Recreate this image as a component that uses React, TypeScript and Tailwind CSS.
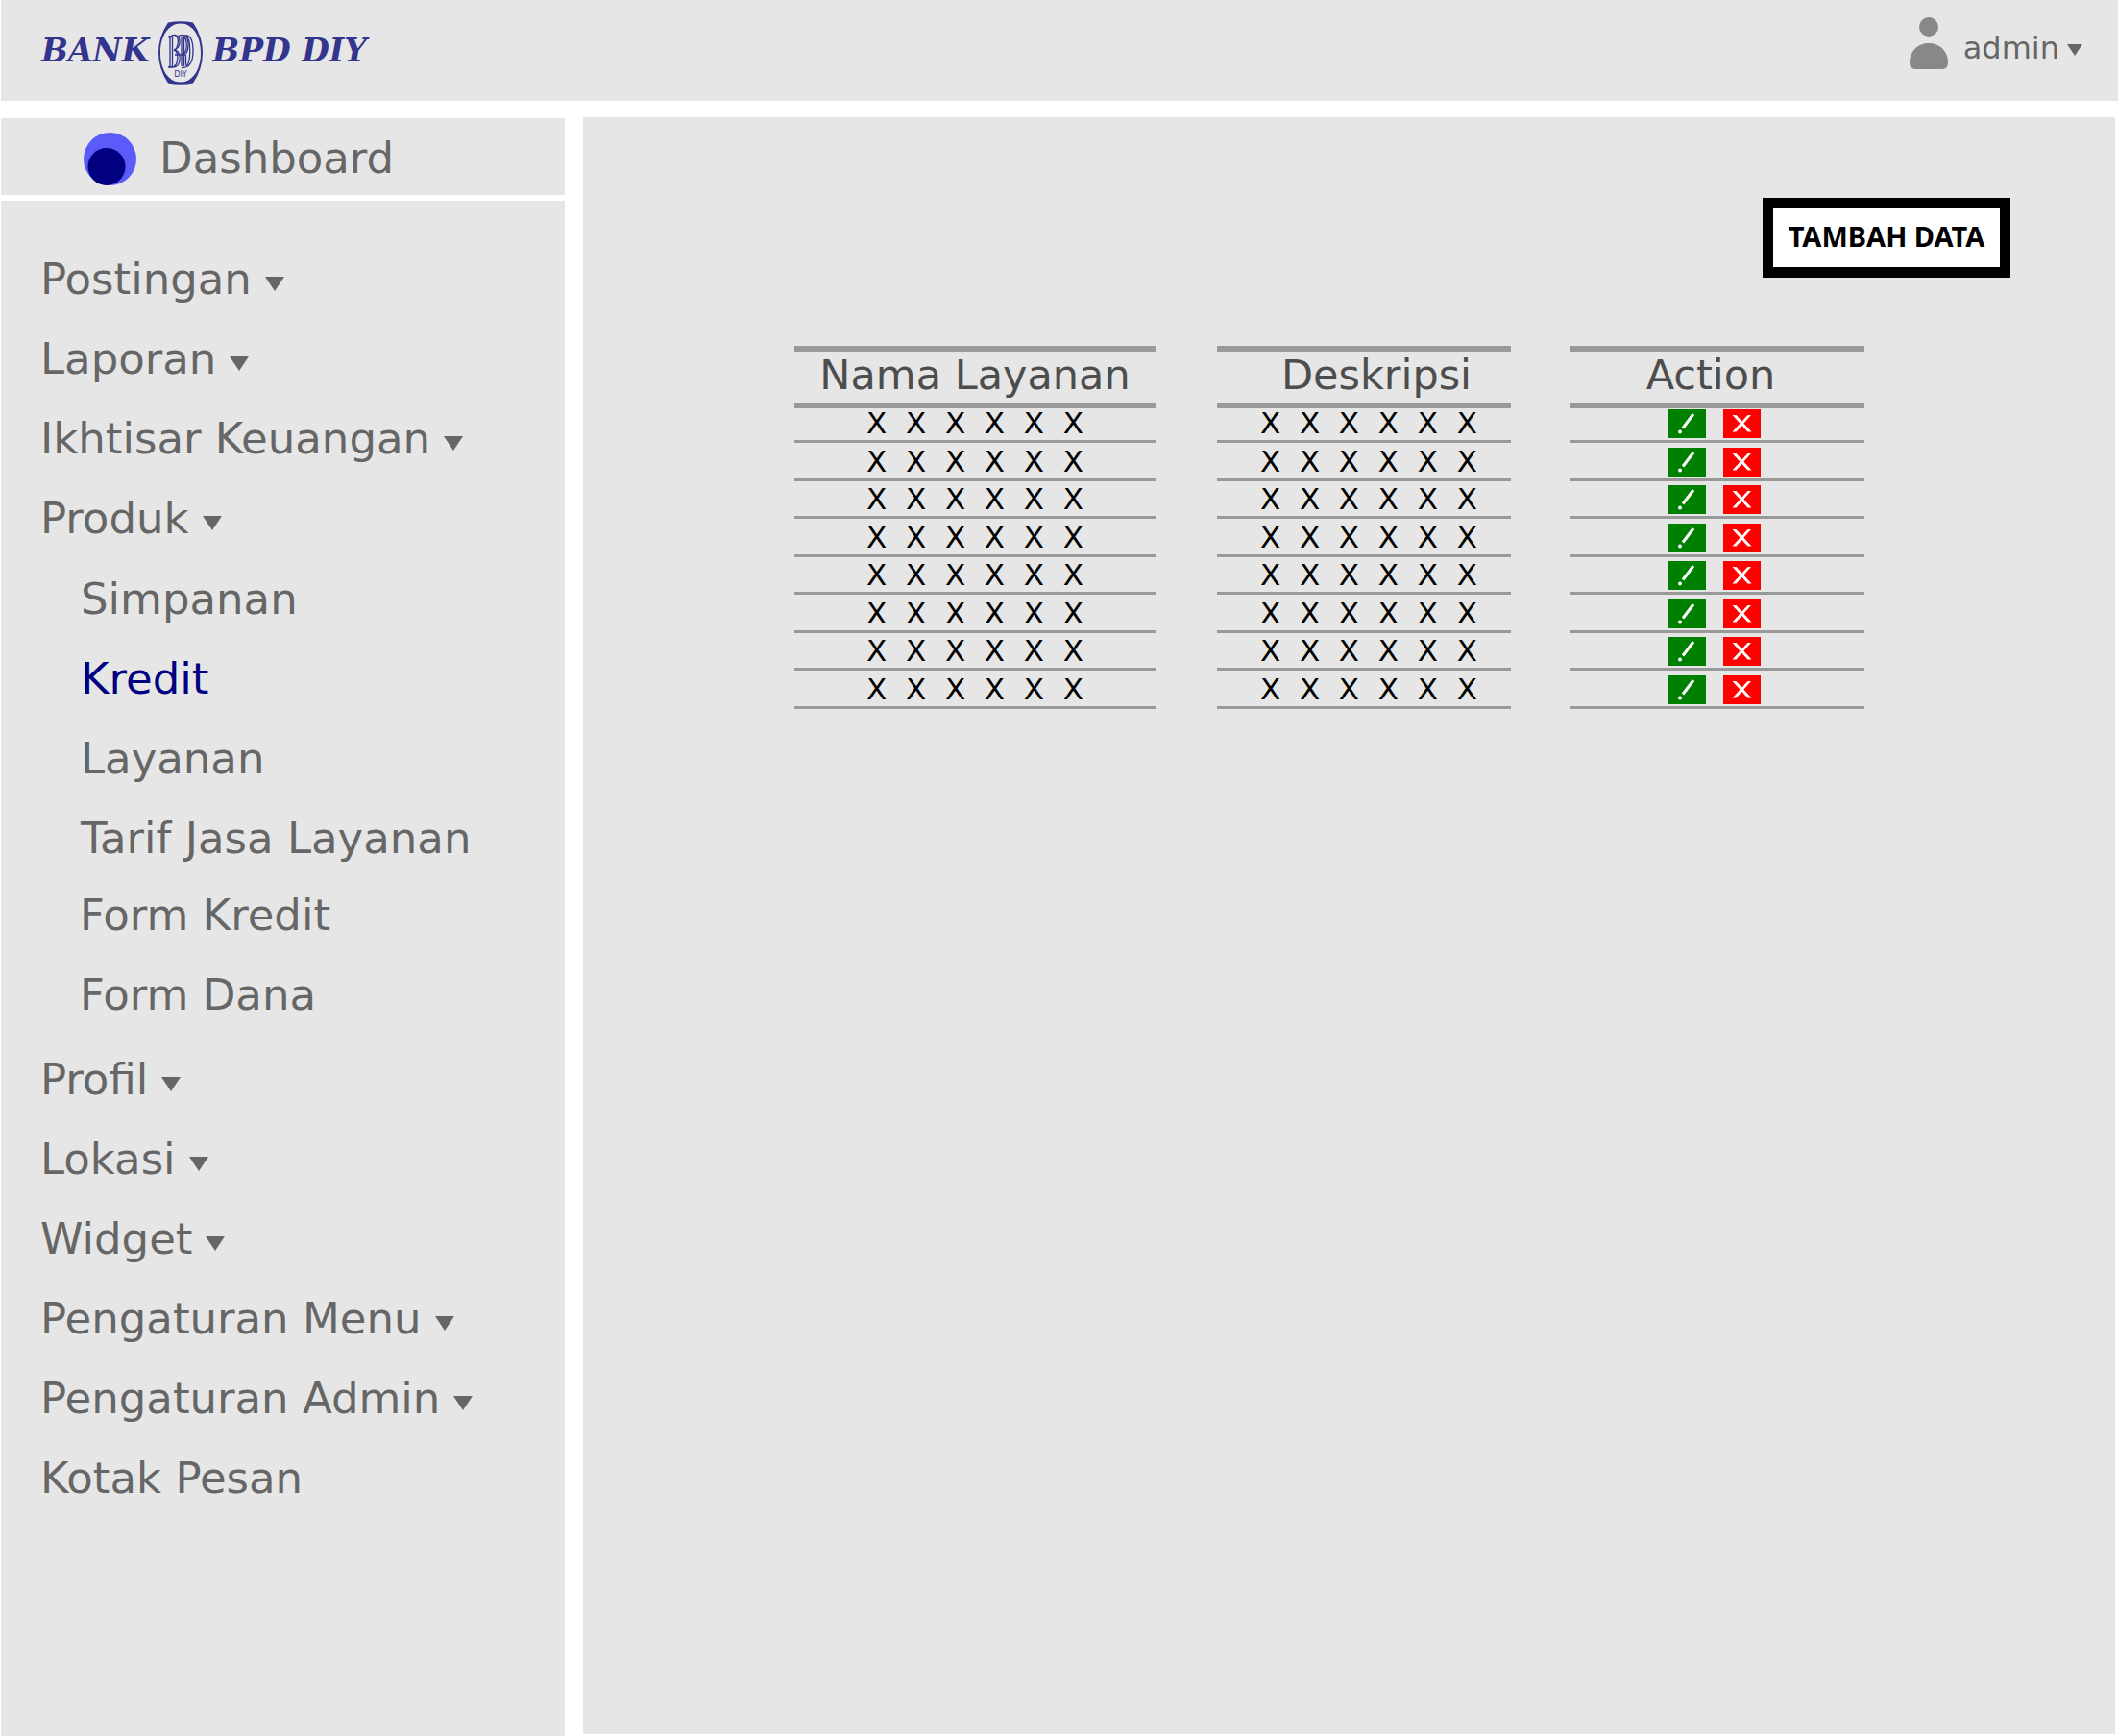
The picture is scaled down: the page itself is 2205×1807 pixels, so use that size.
import React from "react";

type Item = { label: string; menu?: boolean; active?: boolean };

const top: Item[] = [
  { label: "Postingan", menu: true },
  { label: "Laporan", menu: true },
  { label: "Ikhtisar Keuangan", menu: true },
  { label: "Produk", menu: true },
];
const products: Item[] = [
  { label: "Simpanan" },
  { label: "Kredit", active: true },
  { label: "Layanan" },
  { label: "Tarif Jasa Layanan" },
];
const forms: Item[] = [{ label: "Form Kredit" }, { label: "Form Dana" }];
const bottom: Item[] = [
  { label: "Profil", menu: true },
  { label: "Lokasi", menu: true },
  { label: "Widget", menu: true },
  { label: "Pengaturan Menu", menu: true },
  { label: "Pengaturan Admin", menu: true },
  { label: "Kotak Pesan" },
];
const rows = [1, 2, 3, 4, 5, 6, 7, 8];

function Caret({ className }: { className: string }) {
  return (
    <svg viewBox="0 0 20 15" preserveAspectRatio="none" className={className} aria-hidden="true">
      <path d="M0 0H20L10 15Z" fill="currentColor" />
    </svg>
  );
}

function NavList({ items, className }: { items: Item[]; className: string }) {
  return (
    <ul className={"flex flex-col gap-[35px] " + className}>
      {items.map((item) => (
        <li key={item.label} className="flex h-12 items-center">
          {item.menu ? (
            <button type="button" className="flex items-center gap-[14px] whitespace-nowrap leading-[48px]">
              {item.label}
              <Caret className="mt-2 h-[15px] w-5" />
            </button>
          ) : (
            <a
              href="#"
              aria-current={item.active ? "page" : undefined}
              className={
                item.active
                  ? "whitespace-nowrap leading-[48px] text-[#000080]"
                  : "whitespace-nowrap leading-[48px]"
              }
            >
              {item.label}
            </a>
          )}
        </li>
      ))}
    </ul>
  );
}

function Emblem() {
  return (
    <svg viewBox="0 0 46 66" className="h-[66px] w-[46px] text-[#33348e]" role="img" aria-label="DIY">
      <path
        fill="currentColor"
        fillRule="evenodd"
        d="M10 1.5Q23 -1 36 1.5Q46 16 46 33Q46 50 36 64.500Q23 67 10 64.500Q0 50 0 33Q0 16 10 1.500ZM23 2.500C10 2.500 2 16 2 33S10 63.500 23 63.500S44 50 44 33S36 2.500 23 2.500Z"
      />
      <g fill="none" stroke="currentColor" strokeWidth="1.300">
        <path d="M10 16h5M12 16v32M14.500 17v30M10 48h5" />
        <path d="M11 18C15 12 22 14 22 21C22 27 20 29 16 30C21 31 23 35 22 41C21 48 16 49 11 47" />
        <path d="M17 16C23 15 20 30 16 30C22 32 20 46 16 47" />
        <path d="M19 17C24 12 31 15 31 24C31 33 28 36 24 34M24 17v30M26.500 17v30M27 17C30 20 30 30 27 33" />
        <path d="M26 15C33 13 36 20 36 31C36 43 32 49 24 48.500M29 15C34 20 34 42 29 47.500M17 35h11M28.500 35v11" />
      </g>
      <text
        x="23"
        y="58"
        textAnchor="middle"
        fontSize="8"
        fill="currentColor"
        className="font-['DejaVu_Sans',sans-serif] font-normal not-italic"
      >
        DIY
      </text>
    </svg>
  );
}

function DataRow() {
  const cell =
    "border-b-[3px] border-[#999] p-0 pb-[3px] text-center align-bottom text-[31px] leading-[30px] whitespace-pre";
  return (
    <tr className="h-[39px] first:h-[36px] even:h-[40px]">
      <td className={cell}>{"X  X  X  X  X  X"}</td>
      <td className="p-0" />
      <td className={cell}>{" X  X  X  X  X  X"}</td>
      <td className="p-0" />
      <td className="border-b-[3px] border-[#999] p-0 pr-[6px] pb-[2px] align-bottom">
        <div className="flex items-center justify-center gap-[18px]">
          <button type="button" aria-label="Edit" className="h-[30px] w-[39px] bg-[#008000]">
            <svg viewBox="0 0 39 30" className="h-[30px] w-[39px]" aria-hidden="true">
              <path d="M15 19.500L26 5" stroke="#fff" strokeWidth="3" />
              <circle cx="12" cy="23.500" r="2" fill="#fff" />
            </svg>
          </button>
          <button type="button" aria-label="Hapus" className="h-[30px] w-[39px] bg-[#ff0000]">
            <svg viewBox="0 0 39 30" className="h-[30px] w-[39px]" aria-hidden="true">
              <path d="M9.500 6H13.500L29.500 23.500H25.500ZM25.500 6H29L13.500 23.500H9.500Z" fill="#fff" />
            </svg>
          </button>
        </div>
      </td>
    </tr>
  );
}

export default function App() {
  const head =
    "h-[65px] border-y-[6px] border-[#999] p-0 pb-[5px] text-center text-[43px] leading-[48px] font-normal whitespace-nowrap";
  return (
    <div className="flex min-h-screen flex-col bg-white pl-px font-['DejaVu_Sans',sans-serif] text-[#666]">
      <header className="flex h-[105px] shrink-0 items-start justify-between bg-[#e6e6e6] pr-[37px] pl-[42px]">
        <div className="mt-[22px] flex items-center gap-[10px] font-['DejaVu_Serif',serif] text-[33px] leading-[62px] font-bold text-[#33348e] italic">
          <span className="pb-1">BANK</span>
          <Emblem />
          <span className="pb-1">BPD DIY</span>
        </div>
        <button type="button" className="mt-[17px] flex items-start text-[32px] leading-[66px]">
          <svg viewBox="0 0 40 55" className="mr-4 h-[55px] w-10 text-[#888]" aria-hidden="true">
            <circle cx="20" cy="11" r="10" fill="currentColor" />
            <path d="M0 48C0 36 9 28 20 28S40 36 40 48Q40 55 34 55H6Q0 55 0 48Z" fill="currentColor" />
          </svg>
          admin
          <Caret className="mt-[29px] ml-2 h-3 w-4" />
        </button>
      </header>

      <div className="mt-[17px] flex flex-1 gap-[19px] pr-[3px]">
        <aside className="mt-px flex w-[587px] shrink-0 flex-col gap-[6px] text-[45px]">
          <a href="#" className="flex h-20 items-center gap-6 bg-[#e6e6e6] pt-1 pl-[86px] leading-[48px]">
            <svg viewBox="0 0 55 55" className="h-[55px] w-[55px]" aria-hidden="true">
              <circle cx="27.500" cy="27.500" r="27.500" fill="#5b5bf9" />
              <circle cx="24" cy="35.500" r="19.500" fill="#000080" />
            </svg>
            Dashboard
          </a>
          <nav className="flex-1 bg-[#e6e6e6] pt-[58px] pb-10 pl-[41px]">
            <NavList items={top} className="" />
            <NavList items={products} className="mt-9 pl-[42px]" />
            <NavList items={forms} className="mt-8 pl-[41px]" />
            <NavList items={bottom} className="mt-10" />
          </nav>
        </aside>

        <main className="mb-[2px] flex-1 bg-[#e6e6e6] pt-[84px] pr-[109px] pl-[220px]">
          <div className="flex justify-end">
            <button
              type="button"
              className="h-[83px] w-[258px] border-[11px] border-black bg-white pb-1 font-['Noto_Sans',sans-serif] text-[29px] leading-[56px] font-bold whitespace-nowrap text-black"
            >
              TAMBAH DATA
            </button>
          </div>
          <table className="mt-[71px] w-[1114px] table-fixed border-separate border-spacing-0 text-black">
            <colgroup>
              <col className="w-[376px]" />
              <col className="w-[64px]" />
              <col className="w-[306px]" />
              <col className="w-[62px]" />
              <col className="w-[306px]" />
            </colgroup>
            <thead className="text-[#4d4d4d]">
              <tr>
                <th className={head}>Nama Layanan</th>
                <td />
                <th className={head + " pl-[26px]"}>Deskripsi</th>
                <td />
                <th className={head + " pr-[14px]"}>Action</th>
              </tr>
            </thead>
            <tbody>
              {rows.map((r) => (
                <DataRow key={r} />
              ))}
            </tbody>
          </table>
        </main>
      </div>
    </div>
  );
}
